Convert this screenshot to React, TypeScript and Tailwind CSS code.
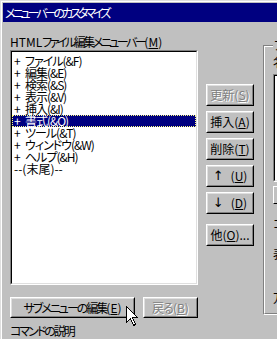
import React from "react";

const FONT = "font-['Noto_Sans_CJK_JP','Noto_Sans',sans-serif] [font-feature-settings:'palt'] text-[12px] leading-[12px]";

function U({ c }: { c: string }) {
  return <span className="underline underline-offset-[1px]">{c}</span>;
}

function Btn({
  children,
  className,
  disabled,
}: {
  children: React.ReactNode;
  className: string;
  disabled?: boolean;
}) {
  return (
    <div className={`border border-t-white border-l-white border-r-black border-b-black ${className}`}>
      <div
        className={`h-full border border-t-[#dfdfdf] border-l-[#dfdfdf] border-r-[#808080] border-b-[#808080] flex items-center justify-center whitespace-nowrap ${
          disabled ? "text-[#808080] [text-shadow:1px_1px_0_#ffffff]" : "text-black"
        }`}
      >
        {children}
      </div>
    </div>
  );
}

const items = [
  ["+", "ファイル(&F)"],
  ["+", "編集(&E)"],
  ["+", "検索(&S)"],
  ["+", "表示(&V)"],
  ["+", "挿入(&I)"],
  ["+", "書式(&O)"],
  ["+", "ツール(&T)"],
  ["+", "ウィンドウ(&W)"],
  ["+", "ヘルプ(&H)"],
];

export default function App() {
  return (
    <div className={`relative w-[277px] h-[339px] overflow-hidden bg-[#c0c0c0] ${FONT}`}>
      <div className="h-full border-t border-l border-t-[#dfdfdf] border-l-[#dfdfdf]">
        <div className="h-full border-t border-l border-t-white border-l-white pt-[1px] pl-[1px]">
          {/* title bar */}
          <div className="h-[19px] bg-[#000080] text-white flex items-center pl-[2px] tracking-[-3px] whitespace-nowrap">
            メニューバーのカスタマイズ
          </div>
          {/* content */}
          <div className="flex flex-row pl-[7px] pt-[14px]">
            {/* left column */}
            <div className="w-[188px] shrink-0 flex flex-col">
              <div className="h-[12px] mb-[2px] whitespace-nowrap">
                HTML<span className="tracking-[-2.5px]">ファイル編集メニューバー</span>(<U c="M" />)
              </div>
              <div className="h-[235px] border border-t-[#808080] border-l-[#808080] border-r-white border-b-white">
                <div className="h-full bg-white border border-t-black border-l-black border-r-[#dfdfdf] border-b-[#dfdfdf] pt-[3px] whitespace-nowrap">
                  {items.map(([p, t], i) =>
                    i === 5 ? (
                      <div
                        key={i}
                        className="h-[12px] bg-[#000080] text-white flex items-center border border-dotted border-[#ffff80] pl-[1px]"
                      >
                        <span className="w-[11px]">{p}</span>
                        <span className="tracking-[-1px]">{t}</span>
                      </div>
                    ) : (
                      <div key={i} className="h-[12px] flex items-center pl-[2px]">
                        <span className="w-[11px]">{p}</span>
                        <span className="tracking-[-1px]">{t}</span>
                      </div>
                    )
                  )}
                  <div className="h-[12px] flex items-center pl-[2px]">--(末尾)--</div>
                </div>
              </div>
              <div className="flex flex-row mt-[12px] gap-[8px]">
                <Btn className="w-[125px] h-[21px]">
                  <span className="tracking-[-2px]">サブメニューの編集</span>(<U c="E" />)
                </Btn>
                <Btn className="w-[55px] h-[21px]" disabled>
                  <span className="tracking-[-1px]">戻る</span>(<U c="B" />)
                </Btn>
              </div>
              <div className="mt-[7px] h-[12px] tracking-[-2px] whitespace-nowrap">コマンドの説明</div>
            </div>
            {/* middle buttons */}
            <div className="w-[48px] ml-[8px] shrink-0 flex flex-col pt-[48px] gap-[5px]">
              <Btn className="h-[22px]" disabled>
                更新(<U c="S" />)
              </Btn>
              <Btn className="h-[22px]">
                挿入(<U c="A" />)
              </Btn>
              <Btn className="h-[22px]">
                削除(<U c="T" />)
              </Btn>
              <Btn className="h-[22px]">
                <span className="mr-[7px] font-['DejaVu_Sans',sans-serif] text-[13px]">↑</span>(<U c="U" />)
              </Btn>
              <Btn className="h-[22px]">
                <span className="mr-[7px] font-['DejaVu_Sans',sans-serif] text-[13px]">↓</span>(<U c="D" />)
              </Btn>
              <Btn className="h-[22px] mt-[5px]">
                他(<U c="O" />)...
              </Btn>
            </div>
            {/* right group box */}
            <div className="ml-[9px] mt-[9px] w-[100px] h-[270px] shrink-0 border border-t-[#808080] border-l-[#808080] border-r-white border-b-white">
              <div className="h-full border border-t-white border-l-white border-r-[#808080] border-b-[#808080] flex flex-col pl-[8px] whitespace-nowrap">
                <div className="-mt-[8px] bg-[#c0c0c0] w-fit px-[1px] h-[12px]">アイテム</div>
                <div className="mt-[5px] h-[12px]">名前</div>
                <div className="mt-[6px] h-[108px] border border-t-[#808080] border-l-[#808080] border-r-white border-b-white">
                  <div className="h-full bg-white border border-t-black border-l-black border-r-[#dfdfdf] border-b-[#dfdfdf]" />
                </div>
                <div className="mt-[4px] h-[18px] border border-t-white border-l-white border-r-black border-b-black" />
                <div className="mt-[14px] h-[12px]">コマンド</div>
                <div className="mt-[18px] h-[12px]">表示</div>
                <div className="mt-[32px] h-[12px]">万</div>
              </div>
            </div>
          </div>
        </div>
      </div>
      {/* mouse cursor */}
      <svg
        className="absolute left-[126px] top-[306px]"
        width="13"
        height="21"
        viewBox="0 0 13 21"
        shapeRendering="crispEdges"
      >
        <path
          d="M0.5 0.5 L0.5 16.5 L4.5 12.5 L7.5 19.5 L9.5 18.5 L6.5 11.5 L11.5 11.5 Z"
          fill="#ffffff"
          stroke="#000000"
          strokeWidth="1"
        />
      </svg>
    </div>
  );
}
